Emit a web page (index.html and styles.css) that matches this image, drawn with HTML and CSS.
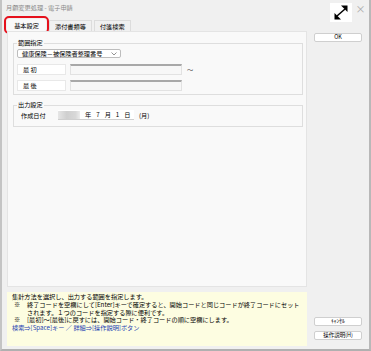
FILE: index.html
```html
<!DOCTYPE html>
<html lang="ja">
<head>
  <meta charset="UTF-8">
  <title>月額変更処理 - 電子申請</title>
  <link rel="stylesheet" href="styles.css">
</head>
<body>
  <div class="window">
    <div class="titlebar">
      <div class="title">月額変更処理 - 電子申請</div>
      <div class="max-btn">
        <svg width="22" height="19" viewBox="0 0 22 19">
          <line x1="7" y1="13" x2="15" y2="6" stroke="#000" stroke-width="1.5"/>
          <polygon points="17.5,2.5 17.5,9 11,2.5" fill="#000"/>
          <polygon points="4.5,16.5 4.5,10 11,16.5" fill="#000"/>
        </svg>
      </div>
      <div class="close-btn">×</div>
    </div>

    <div class="content">
      <div class="main">
        <div class="tabs">
          <div class="tab active">基本設定</div>
          <div class="tab">添付書類等</div>
          <div class="tab">付箋検索</div>
        </div>

        <div class="panel">
          <fieldset class="group range">
            <legend>範囲指定</legend>
            <div class="select">
              <span>健康保険－被保険者整理番号</span>
              <svg width="6" height="4" viewBox="0 0 6 4"><polyline points="0.5,0.5 3,3 5.5,0.5" fill="none" stroke="#777" stroke-width="0.8"/></svg>
            </div>
            <div class="row">
              <div class="label">最 初</div>
              <div class="input"></div>
              <div class="tilde">～</div>
            </div>
            <div class="row">
              <div class="label">最 後</div>
              <div class="input"></div>
            </div>
          </fieldset>

          <fieldset class="group output">
            <legend>出力設定</legend>
            <div class="row date-row">
              <div class="date-label">作成日付</div>
              <div class="date">
                <span class="blur"></span>
                <span>年</span><span>7</span><span>月</span><span>1</span><span>日</span>
              </div>
              <div class="weekday">(月)</div>
            </div>
          </fieldset>
        </div>

        <div class="help">
          <p>集計方法を選択し、出力する範囲を指定します。</p>
          <p class="note"><span class="mark">※</span><span>終了コードを空欄にして[Enter]キーで確定すると、開始コードと同じコードが終了コードにセットされます。１つのコードを指定する際に便利です。</span></p>
          <p class="note"><span class="mark">※</span><span>[最初]～[最後]に戻すには、開始コード・終了コードの順に空欄にします。</span></p>
          <p class="link">検索⇒[Space]キー ／ 詳細⇒[操作説明]ボタン</p>
        </div>
      </div>

      <div class="side">
        <button class="btn">OK</button>
        <div class="spacer"></div>
        <button class="btn">ｷｬﾝｾﾙ</button>
        <button class="btn">操作説明(H)</button>
      </div>
    </div>
  </div>
</body>
</html>
```

FILE: styles.css
```css
body {
  margin: 0;
  font-family: "Noto Sans CJK JP", "Noto Sans", sans-serif;
  font-size: 6.2px;
  color: #000;
  background: #f0f0f0;
}

.window {
  width: 371px;
  height: 351px;
  box-sizing: border-box;
  background: #f0f0f0;
  border-left: 2px solid #c4c4c4;
  border-right: 2px solid #b8b8b8;
  border-bottom: 2px solid #b0b0b0;
  display: flex;
  flex-direction: column;
  overflow: hidden;
}

.titlebar {
  height: 17px;
  flex-shrink: 0;
  display: flex;
  align-items: flex-start;
}

.title {
  margin: 4px 0 0 4px;
  color: #8a8a8a;
  line-height: 8px;
  flex: 1;
}

.max-btn {
  margin-top: 3px;
  width: 22px;
  height: 19px;
  background: #fff;
  position: relative;
  z-index: 1;
}

.max-btn svg {
  display: block;
}

.close-btn {
  width: 17px;
  margin-top: 3px;
  text-align: center;
  color: #aaa;
  font-size: 10px;
  line-height: 12px;
}

.content {
  flex: 1;
  display: flex;
}

.main {
  width: 300px;
  margin-left: 5px;
  display: flex;
  flex-direction: column;
}

.tabs {
  height: 14px;
  display: flex;
  align-items: flex-end;
  gap: 2px;
}

.tab {
  height: 11px;
  padding: 0 5px;
  line-height: 11px;
  background: #f0f0f0;
  border: 1px solid #dcdcdc;
  border-bottom: none;
  box-sizing: border-box;
}

.tab.active {
  height: 12px;
  width: 39px;
  margin-right: 1px;
  text-align: center;
  background: #f9f9f9;
  border-color: #f9f9f9;
  outline: 2px solid #e5101c;
  outline-offset: 1px;
  border-radius: 2px;
}

.panel {
  height: 256px;
  box-sizing: border-box;
  background: #f9f9f9;
  border: 1px solid #e4e4e4;
  padding: 7px 3px 0 5px;
}

.group {
  margin: 0;
  border: 1px solid #dedede;
  padding: 0 3px 5px 3px;
}

.group legend {
  padding: 0 1px;
  line-height: 8px;
}

.range {
  height: 56px;
  box-sizing: border-box;
}

.select {
  width: 104px;
  height: 9px;
  margin-top: 2px;
  box-sizing: border-box;
  border: 1px solid #bdbdbd;
  border-radius: 2px;
  background: #fff;
  display: flex;
  align-items: center;
  justify-content: space-between;
  padding: 0 3px 0 4px;
  line-height: 7px;
}

.row {
  display: flex;
  align-items: center;
  gap: 4px;
  margin-top: 6px;
}

.range .row + .row {
  margin-top: 5px;
}

.label {
  width: 49px;
  height: 11px;
  box-sizing: border-box;
  background: #fff;
  border: 1px solid #e8e8e8;
  padding-left: 5px;
  line-height: 9px;
}

.input {
  width: 112px;
  height: 11px;
  box-sizing: border-box;
  background: #f7f7f7;
  border: 1px solid #e2e2e2;
  border-top: 2px solid #a8a8a8;
}

.tilde {
  color: #555;
  margin-left: 1px;
}

.output {
  margin-top: 6px;
  height: 26px;
  box-sizing: border-box;
}

.date-row {
  margin-top: 1px;
}

.date-label {
  width: 33px;
  padding-left: 4px;
}

.date {
  width: 76px;
  height: 10px;
  box-sizing: border-box;
  background: #fff;
  border-bottom: 1px solid #cfcfcf;
  display: flex;
  align-items: center;
  gap: 5px;
  line-height: 8px;
}

.blur {
  width: 22px;
  height: 8px;
  background: linear-gradient(90deg, #e6e6e6, #cfcfcf 40%, #d8d8d8 80%, #ececec);
}

.weekday {
  margin-left: 1px;
}

.help {
  margin-top: 5px;
  height: 54px;
  box-sizing: border-box;
  background: #fdfde1;
  padding: 1px 5px 0 5px;
  line-height: 8px;
}

.help p {
  margin: 0;
}

.note {
  display: flex;
  line-height: 7.5px;
}

.note .mark {
  width: 13px;
  flex-shrink: 0;
  padding-left: 2px;
}

.link {
  color: #1f3fb3;
}

.side {
  width: 48px;
  margin-left: 7px;
  display: flex;
  flex-direction: column;
  padding: 16px 0 4px 0;
}

.spacer {
  flex: 1;
}

.btn {
  width: 48px;
  height: 9px;
  padding: 0;
  margin-bottom: 5px;
  font-family: inherit;
  font-size: 5.5px;
  line-height: 7px;
  color: #000;
  background: #fff;
  border: 1px solid #cfcfcf;
  border-radius: 2px;
}
```
